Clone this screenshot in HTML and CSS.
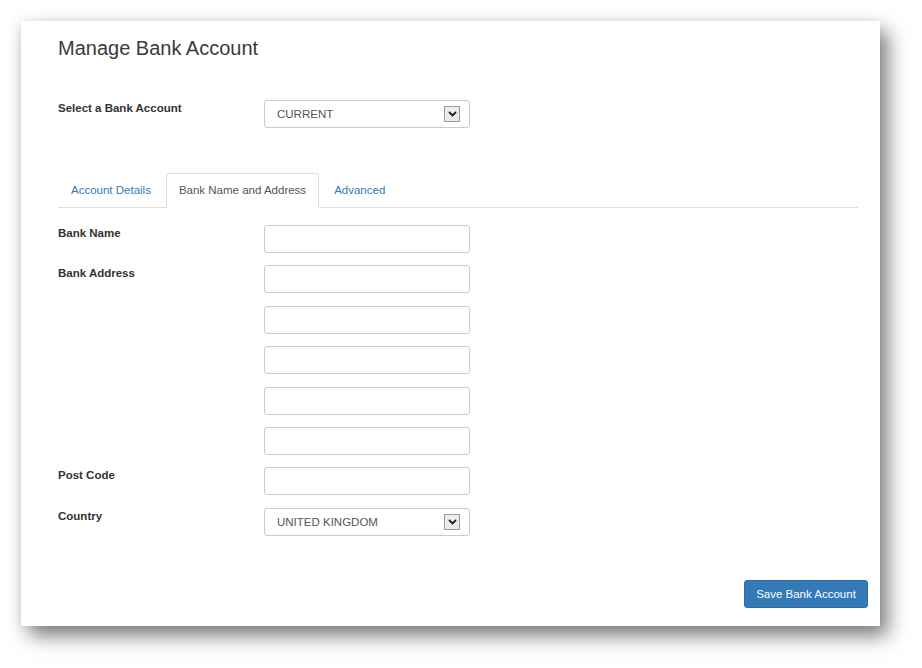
FILE: index.html
```html
<!DOCTYPE html>
<html>
<head>
<meta charset="utf-8">
<link rel="stylesheet" href="styles.css">
</head>
<body>
<div class="panel">
  <h1 class="title">Manage Bank Account</h1>
  <div class="row top-row">
    <div class="label">Select a Bank Account</div>
    <div class="select">
      <span class="select-text">CURRENT</span>
      <span class="arrow"><svg width="9" height="6" viewBox="0 0 9 6"><path d="M1 1 L4.5 4.5 L8 1" fill="none" stroke="#222" stroke-width="1.8"/></svg></span>
    </div>
  </div>
  <div class="tabs">
    <div class="tab">Account Details</div>
    <div class="tab active">Bank Name and Address</div>
    <div class="tab">Advanced</div>
  </div>
  <div class="form">
    <div class="row">
      <div class="label">Bank Name</div>
      <div class="input"></div>
    </div>
    <div class="row">
      <div class="label">Bank Address</div>
      <div class="input"></div>
    </div>
    <div class="row">
      <div class="label"></div>
      <div class="input"></div>
    </div>
    <div class="row">
      <div class="label"></div>
      <div class="input"></div>
    </div>
    <div class="row">
      <div class="label"></div>
      <div class="input"></div>
    </div>
    <div class="row">
      <div class="label"></div>
      <div class="input"></div>
    </div>
    <div class="row">
      <div class="label">Post Code</div>
      <div class="input"></div>
    </div>
    <div class="row">
      <div class="label">Country</div>
      <div class="select">
        <span class="select-text">UNITED KINGDOM</span>
        <span class="arrow"><svg width="9" height="6" viewBox="0 0 9 6"><path d="M1 1 L4.5 4.5 L8 1" fill="none" stroke="#222" stroke-width="1.8"/></svg></span>
      </div>
    </div>
  </div>
  <div class="actions">
    <div class="btn">Save Bank Account</div>
  </div>
</div>
</body>
</html>
```
FILE: styles.css
```css
html, body {
  margin: 0;
  padding: 0;
  background: #ffffff;
}
body {
  font-family: "Liberation Sans", Arial, sans-serif;
  color: #333;
  padding: 21px 0 42px 21px;
}
.panel {
  box-sizing: border-box;
  width: 859px;
  height: 605px;
  background: #fff;
  box-shadow: 8px 10px 18px rgba(0, 0, 0, 0.5), -3px 0 10px rgba(0, 0, 0, 0.07);
  padding: 15px 22px 18px 37px;
  display: flex;
  flex-direction: column;
}
.title {
  margin: 0;
  font-size: 20px;
  font-weight: normal;
  line-height: 24px;
  color: #3a3a3a;
}
.row {
  display: flex;
  align-items: flex-start;
}
.top-row {
  margin-top: 40px;
}
.label {
  width: 206px;
  flex: none;
  font-size: 11.5px;
  font-weight: bold;
  line-height: 14px;
  padding-top: 1px;
  color: #333;
}
.input, .select {
  box-sizing: border-box;
  width: 206px;
  height: 28px;
  border: 1px solid #ccc;
  border-radius: 3px;
  background: #fff;
}
.select {
  display: flex;
  align-items: center;
  justify-content: space-between;
  padding: 0 9px 0 12px;
}
.select-text {
  font-size: 11.5px;
  color: #555;
}
.arrow {
  box-sizing: border-box;
  width: 16px;
  height: 16px;
  border: 1px solid #9a9a9a;
  background: #ececec;
  display: flex;
  align-items: center;
  justify-content: center;
}
.tabs {
  margin-top: 45px;
  display: flex;
  border-bottom: 1px solid #ddd;
  height: 35px;
  box-sizing: border-box;
}
.tab {
  box-sizing: border-box;
  height: 35px;
  padding: 0 12px;
  margin-right: 2px;
  font-size: 11.5px;
  line-height: 33px;
  color: #337ab7;
  border: 1px solid transparent;
  border-radius: 3px 3px 0 0;
}
.tab.active {
  color: #555;
  background: #fff;
  border-color: #ddd;
  border-bottom-color: #fff;
}
.form {
  margin-top: 17px;
  display: flex;
  flex-direction: column;
  gap: 12.4px;
}
.actions {
  margin-top: auto;
  margin-right: -10px;
  display: flex;
  justify-content: flex-end;
}
.btn {
  box-sizing: border-box;
  width: 124px;
  height: 28px;
  background: #337ab7;
  border: 1px solid #2e6da4;
  border-radius: 3px;
  color: #fff;
  font-size: 11.5px;
  line-height: 26px;
  text-align: center;
}
```
